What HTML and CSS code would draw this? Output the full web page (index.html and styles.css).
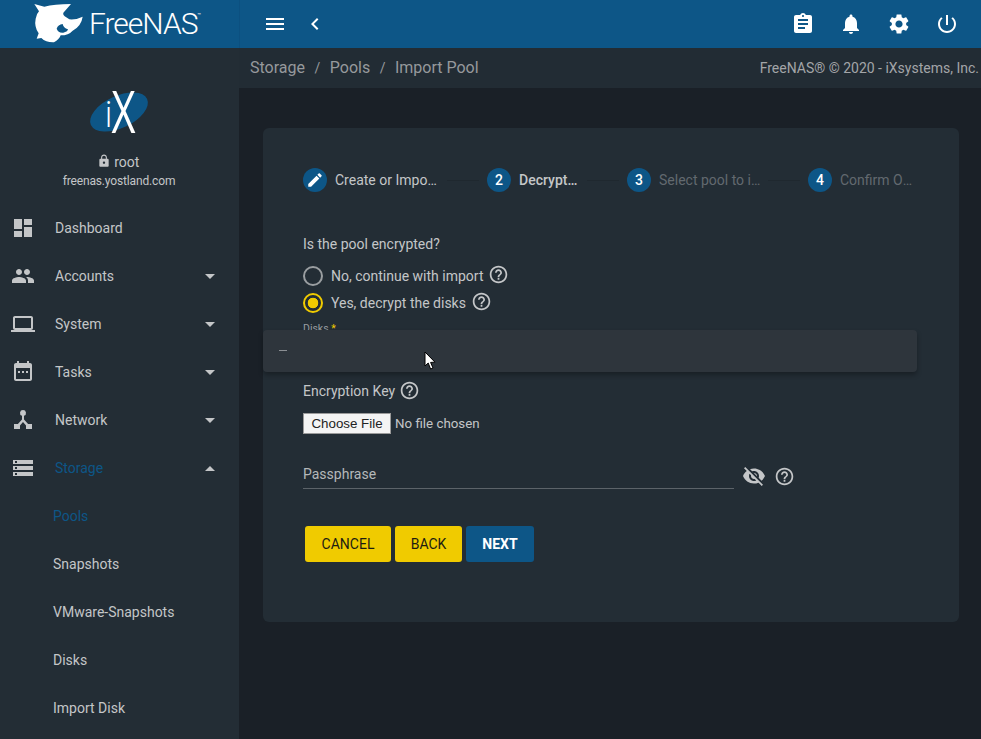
FILE: index.html
```html
<!DOCTYPE html>
<html lang="en">
<head>
    <meta charset="UTF-8">
    <title>FreeNAS - Import Pool</title>
    <link rel="stylesheet" href="styles.css">
</head>
<body>
    <svg class="icon-defs" width="0" height="0">
        <symbol id="i-menu" viewBox="0 0 24 24"><path d="M3 18h18v-2H3v2zm0-5h18v-2H3v2zm0-7v2h18V6H3z"/></symbol>
        <symbol id="i-back" viewBox="0 0 24 24"><path d="M15.41 7.41L14 6l-6 6 6 6 1.41-1.41L10.83 12z"/></symbol>
        <symbol id="i-clipboard" viewBox="0 0 24 24"><path d="M19 3h-4.18C14.4 1.84 13.3 1 12 1c-1.3 0-2.4.84-2.82 2H5c-1.1 0-2 .9-2 2v14c0 1.1.9 2 2 2h14c1.1 0 2-.9 2-2V5c0-1.1-.9-2-2-2zm-7 0c.55 0 1 .45 1 1s-.45 1-1 1-1-.45-1-1 .45-1 1-1zm2 14H7v-2h7v2zm3-4H7v-2h10v2zm0-4H7V7h10v2z"/></symbol>
        <symbol id="i-bell" viewBox="0 0 24 24"><path d="M12 22c1.1 0 2-.9 2-2h-4c0 1.1.89 2 2 2zm6-6v-5c0-3.07-1.64-5.64-4.5-6.32V4c0-.83-.67-1.5-1.5-1.5s-1.5.67-1.5 1.5v.68C7.63 5.36 6 7.92 6 11v5l-2 2v1h16v-1l-2-2z"/></symbol>
        <symbol id="i-gear" viewBox="0 0 24 24"><path d="M19.14 12.94c.04-.3.06-.61.06-.94 0-.32-.02-.64-.07-.94l2.03-1.58c.18-.14.23-.41.12-.61l-1.92-3.32c-.12-.22-.37-.29-.59-.22l-2.39.96c-.5-.38-1.03-.7-1.62-.94l-.36-2.54c-.04-.24-.24-.41-.48-.41h-3.84c-.24 0-.43.17-.47.41l-.36 2.54c-.59.24-1.13.57-1.62.94l-2.39-.96c-.22-.08-.47 0-.59.22L2.74 8.87c-.12.21-.08.47.12.61l2.03 1.58c-.05.3-.09.63-.09.94s.02.64.07.94l-2.03 1.58c-.18.14-.23.41-.12.61l1.92 3.32c.12.22.37.29.59.22l2.39-.96c.5.38 1.03.7 1.62.94l.36 2.54c.05.24.24.41.48.41h3.84c.24 0 .44-.17.47-.41l.36-2.54c.59-.24 1.13-.56 1.62-.94l2.39.96c.22.08.47 0 .59-.22l1.92-3.32c.12-.22.07-.47-.12-.61l-2.01-1.58zM12 15.6c-1.98 0-3.6-1.62-3.6-3.6s1.62-3.6 3.6-3.6 3.6 1.62 3.6 3.6-1.62 3.6-3.6 3.6z"/></symbol>
        <symbol id="i-power" viewBox="0 0 24 24"><path d="M13 3h-2v10h2V3zm4.83 2.17l-1.42 1.42C17.99 7.86 19 9.81 19 12c0 3.87-3.13 7-7 7s-7-3.13-7-7c0-2.19 1.01-4.14 2.58-5.42L6.17 5.17C4.23 6.82 3 9.26 3 12c0 4.97 4.03 9 9 9s9-4.03 9-9c0-2.74-1.23-5.18-3.17-6.83z"/></symbol>
        <symbol id="i-lock" viewBox="0 0 24 24"><path d="M18 8h-1V6c0-2.76-2.24-5-5-5S7 3.24 7 6v2H6c-1.1 0-2 .9-2 2v10c0 1.1.9 2 2 2h12c1.1 0 2-.9 2-2V10c0-1.1-.9-2-2-2zm-6 9c-1.1 0-2-.9-2-2s.9-2 2-2 2 .9 2 2-.9 2-2 2zm3.1-9H8.9V6c0-1.71 1.39-3.1 3.1-3.1 1.71 0 3.1 1.39 3.1 3.1v2z"/></symbol>
        <symbol id="i-dashboard" viewBox="0 0 24 24"><path d="M3 13h8V3H3v10zm0 8h8v-6H3v6zm10 0h8V11h-8v10zm0-18v6h8V3h-8z"/></symbol>
        <symbol id="i-group" viewBox="0 0 24 24"><path d="M16 11c1.66 0 2.99-1.34 2.99-3S17.66 5 16 5c-1.66 0-3 1.34-3 3s1.34 3 3 3zm-8 0c1.66 0 2.99-1.34 2.99-3S9.66 5 8 5C6.34 5 5 6.34 5 8s1.34 3 3 3zm0 2c-2.33 0-7 1.17-7 3.5V19h14v-2.5c0-2.33-4.67-3.5-7-3.5zm8 0c-.29 0-.62.02-.97.05 1.16.84 1.97 1.97 1.97 3.45V19h6v-2.5c0-2.33-4.67-3.5-7-3.5z"/></symbol>
        <symbol id="i-laptop" viewBox="0 0 24 24"><path d="M20 18c1.1 0 1.99-.9 1.99-2L22 6c0-1.1-.9-2-2-2H4c-1.1 0-2 .9-2 2v10c0 1.1.9 2 2 2H0v2h24v-2h-4zM4 6h16v10H4V6z"/></symbol>
        <symbol id="i-calendar" viewBox="0 0 24 24"><path d="M19 3h-1V1h-2v2H8V1H6v2H5c-1.1 0-2 .9-2 2v14c0 1.1.9 2 2 2h14c1.1 0 2-.9 2-2V5c0-1.1-.9-2-2-2zm0 16H5V8h14v11zM7 11h2v2H7zm4 0h2v2h-2zm4 0h2v2h-2z"/></symbol>
        <symbol id="i-network" viewBox="0 0 24 24"><path d="M12 2a3 3 0 0 0-1 5.83V11.4L6.9 16H3v5h6v-3.6l3-3.4 3 3.4V21h6v-5h-3.9L13 11.4V7.83A3 3 0 0 0 12 2z"/></symbol>
        <symbol id="i-storage" viewBox="0 0 24 24"><path d="M2 20h20v-4H2v4zm2-3h2v2H4v-2zM2 4v4h20V4H2zm4 3H4V5h2v2zm-4 7h20v-4H2v4zm2-3h2v2H4v-2z"/></symbol>
        <symbol id="i-edit" viewBox="0 0 24 24"><path d="M3 17.25V21h3.75L17.81 9.94l-3.75-3.75L3 17.25zM20.71 7.04c.39-.39.39-1.02 0-1.41l-2.34-2.34c-.39-.39-1.02-.39-1.41 0l-1.83 1.83 3.75 3.75 1.83-1.83z"/></symbol>
        <symbol id="i-help" viewBox="0 0 24 24"><path d="M11 18h2v-2h-2v2zm1-16C6.48 2 2 6.48 2 12s4.48 10 10 10 10-4.48 10-10S17.52 2 12 2zm0 18c-4.41 0-8-3.59-8-8s3.59-8 8-8 8 3.59 8 8-3.59 8-8 8zm0-14c-2.21 0-4 1.79-4 4h2c0-1.1.9-2 2-2s2 .9 2 2c0 2-3 1.75-3 5h2c0-2.25 3-2.5 3-5 0-2.21-1.79-4-4-4z"/></symbol>
        <symbol id="i-eye-off" viewBox="0 0 24 24"><path d="M12 7c2.76 0 5 2.24 5 5 0 .65-.13 1.26-.36 1.83l2.92 2.92c1.51-1.26 2.7-2.89 3.43-4.75-1.73-4.39-6-7.5-11-7.5-1.4 0-2.74.25-3.98.7l2.16 2.16C10.74 7.13 11.35 7 12 7zM2 4.27l2.28 2.28.46.46C3.08 8.3 1.78 10.02 1 12c1.73 4.39 6 7.5 11 7.5 1.55 0 3.03-.3 4.38-.84l.42.42L19.73 22 21 20.73 3.27 3 2 4.27zM7.53 9.8l1.55 1.55c-.05.21-.08.43-.08.65 0 1.66 1.34 3 3 3 .22 0 .44-.03.65-.08l1.55 1.55c-.67.33-1.41.53-2.2.53-2.76 0-5-2.24-5-5 0-.79.2-1.53.53-2.2zm4.31-.78l3.15 3.15.02-.16c0-1.66-1.34-3-3-3l-.17.01z"/></symbol>
    </svg>

    <header class="top-bar">
        <div class="brand">
            <svg class="shark" viewBox="0 0 180 144">
                <path fill-rule="evenodd" d="M25 12 L55 20 Q85 13 135 12 L116 34 Q107 42 116 49 L130 58 Q150 60 170 50 Q166 78 140 92 Q128 106 104 106 Q100 118 84 127 Q60 128 46 114 L32 116 L38 100 Q24 80 29 56 Q31 42 39 34 Z M92 86 Q97 100 112 98 Q124 96 126 88 Q112 84 110 72 Q96 74 92 86 Z"/>
            </svg>
            <span class="brand-name">FreeNAS</span><span class="brand-tm">&trade;</span>
        </div>
        <div class="top-left">
            <svg class="top-icon"><use href="#i-menu"/></svg>
            <svg class="top-icon"><use href="#i-back"/></svg>
        </div>
        <div class="top-right">
            <svg class="top-icon"><use href="#i-clipboard"/></svg>
            <svg class="top-icon"><use href="#i-bell"/></svg>
            <svg class="top-icon"><use href="#i-gear"/></svg>
            <svg class="top-icon"><use href="#i-power"/></svg>
        </div>
    </header>

    <div class="layout">
        <aside class="sidebar">
            <div class="user-box">
                <svg class="ix-logo" viewBox="0 0 56 42">
                    <ellipse cx="28" cy="21" rx="31" ry="16" transform="rotate(-25 28 21)"/>
                    <text x="13.5" y="36" class="ix-i">i</text>
                    <text x="20.5" y="41.5" class="ix-x" textLength="24" lengthAdjust="spacingAndGlyphs">X</text>
                </svg>
                <div class="user-name"><svg class="lock-icon"><use href="#i-lock"/></svg> root</div>
                <div class="host-name">freenas.yostland.com</div>
            </div>
            <nav class="nav">
                <a class="nav-item"><svg class="nav-icon"><use href="#i-dashboard"/></svg>Dashboard</a>
                <a class="nav-item"><svg class="nav-icon"><use href="#i-group"/></svg>Accounts<span class="caret"></span></a>
                <a class="nav-item"><svg class="nav-icon"><use href="#i-laptop"/></svg>System<span class="caret"></span></a>
                <a class="nav-item"><svg class="nav-icon"><use href="#i-calendar"/></svg>Tasks<span class="caret"></span></a>
                <a class="nav-item"><svg class="nav-icon"><use href="#i-network"/></svg>Network<span class="caret"></span></a>
                <a class="nav-item open"><svg class="nav-icon"><use href="#i-storage"/></svg>Storage<span class="caret up"></span></a>
                <a class="sub-item open">Pools</a>
                <a class="sub-item">Snapshots</a>
                <a class="sub-item">VMware-Snapshots</a>
                <a class="sub-item">Disks</a>
                <a class="sub-item">Import Disk</a>
            </nav>
        </aside>

        <main class="content">
            <div class="crumb-bar">
                <div class="crumbs">
                    <span>Storage</span><span class="sep">/</span><span>Pools</span><span class="sep">/</span><span>Import Pool</span>
                </div>
                <div class="copyright">FreeNAS&reg; &copy; 2020 - iXsystems, Inc.</div>
            </div>

            <section class="card">
                <div class="stepper">
                    <div class="step-num"><svg class="edit-icon"><use href="#i-edit"/></svg></div>
                    <div class="step-label w1">Create or Import pool</div>
                    <div class="step-line"></div>
                    <div class="step-num">2</div>
                    <div class="step-label w2 active">Decrypt pool</div>
                    <div class="step-line"></div>
                    <div class="step-num">3</div>
                    <div class="step-label w3 muted">Select pool to import</div>
                    <div class="step-line"></div>
                    <div class="step-num">4</div>
                    <div class="step-label w4 muted">Confirm Options</div>
                </div>

                <div class="question">Is the pool encrypted?</div>
                <div class="radio-row">
                    <span class="radio"></span>No, continue with import
                    <svg class="help-icon"><use href="#i-help"/></svg>
                </div>
                <div class="radio-row">
                    <span class="radio checked"></span>Yes, decrypt the disks
                    <svg class="help-icon"><use href="#i-help"/></svg>
                </div>
                <div class="disks-label">Disks <span class="req">*</span></div>

                <div class="key-label">Encryption Key <svg class="help-icon"><use href="#i-help"/></svg></div>
                <div class="file-row"><input type="file" class="file-input"></div>

                <div class="pass-row">
                    <div class="pass-field">Passphrase</div>
                    <svg class="eye-icon"><use href="#i-eye-off"/></svg>
                    <svg class="help-icon"><use href="#i-help"/></svg>
                </div>

                <div class="actions">
                    <button class="btn yellow btn-cancel">CANCEL</button>
                    <button class="btn yellow btn-back">BACK</button>
                    <button class="btn blue btn-next">NEXT</button>
                </div>
            </section>
        </main>
    </div>

    <!-- open select panel and mouse pointer sit over the form -->
    <div class="select-panel"><span class="select-dash"></span></div>
    <svg class="cursor" viewBox="0 0 12 20">
        <path d="M1 1 L1 15 L4.2 12 L6.6 18 L9 17 L6.6 11.4 L11 11.2 Z" fill="#fff" stroke="#000" stroke-width="1"/>
    </svg>
</body>
</html>
```

FILE: styles.css
```css
* {
    box-sizing: border-box;
}
html, body {
    height: 100%;
}
body {
    margin: 0;
    position: relative;
    overflow: hidden;
    display: flex;
    flex-direction: column;
    font-family: Roboto, "Liberation Sans", sans-serif;
    font-size: 14px;
    color: #c4c6c8;
    background-color: #1a2027;
}
.icon-defs {
    position: absolute;
}

/* top bar */
.top-bar {
    height: 48px;
    flex: none;
    display: flex;
    align-items: center;
    background-color: #0d5687;
    color: white;
}
.brand {
    width: 240px;
    height: 48px;
    flex: none;
    display: flex;
    align-items: flex-start;
    padding-left: 26px;
    border-right: 1px solid #0c5080;
}
.shark {
    width: 60px;
    height: 48px;
    fill: white;
    flex: none;
}
.brand-name {
    font-family: Roboto, sans-serif;
    font-weight: 300;
    font-size: 30px;
    letter-spacing: -1px;
    line-height: 48px;
    margin-left: 3px;
}
.brand-tm {
    font-size: 6px;
    line-height: 8px;
    margin-top: 11px;
}
.top-left {
    display: flex;
    gap: 16px;
    margin-left: 23px;
}
.top-right {
    display: flex;
    gap: 24px;
    margin-left: auto;
    margin-right: 22px;
}
.top-icon {
    width: 24px;
    height: 24px;
    fill: white;
}

/* sidebar */
.layout {
    flex: 1;
    display: flex;
    min-height: 0;
}
.sidebar {
    width: 239px;
    flex: none;
    background-color: #232d35;
}
.user-box {
    height: 156px;
    padding-top: 42px;
    padding-right: 1px;
    text-align: center;
}
.ix-logo {
    display: block;
    width: 56px;
    height: 42px;
    margin: 1px auto 0;
    overflow: visible;
    fill: #0d5687;
}
.ix-i {
    font-family: "Open Sans", sans-serif;
    font-weight: 300;
    font-size: 36px;
    fill: white;
}
.ix-x {
    font-family: "Open Sans", sans-serif;
    font-weight: 400;
    font-size: 58px;
    fill: white;
}
.user-name {
    margin-top: 20px;
    padding-right: 2px;
    line-height: 18px;
}
.lock-icon {
    width: 14px;
    height: 14px;
    fill: #c4c6c8;
    vertical-align: -1px;
}
.host-name {
    margin-top: 1px;
    font-size: 12px;
    letter-spacing: -0.15px;
    line-height: 18px;
}
.nav-item, .sub-item {
    display: flex;
    align-items: center;
    height: 48px;
}
.nav-item {
    padding-left: 11px;
    padding-right: 24px;
}
.sub-item {
    padding-left: 53px;
}
.open {
    color: #0d5687;
}
.nav-icon {
    width: 24px;
    height: 24px;
    margin-right: 20px;
    fill: #c4c6c8;
}
.caret {
    margin-left: auto;
    width: 0;
    height: 0;
    border-left: 5px solid transparent;
    border-right: 5px solid transparent;
    border-top: 5px solid #c4c6c8;
}
.caret.up {
    border-top: none;
    border-bottom: 5px solid #c4c6c8;
}

/* page */
.content {
    flex: 1;
    min-width: 0;
}
.crumb-bar {
    height: 40px;
    display: flex;
    align-items: center;
    justify-content: space-between;
    padding: 0 2px 0 11px;
    background-color: #222c34;
}
.crumbs {
    font-size: 16px;
    color: #96999c;
    margin-bottom: 1px;
}
.sep {
    margin: 0 9.5px;
    font-size: 14px;
}
.copyright {
    color: #a3a5a8;
    margin-bottom: 1px;
}
.card {
    width: 696px;
    height: 494px;
    margin: 40px 0 0 24px;
    padding: 40px 40px 0;
    border-radius: 6px;
    background-color: #232d35;
}

/* stepper */
.stepper {
    display: flex;
    align-items: center;
    height: 24px;
}
.step-num {
    width: 24px;
    height: 24px;
    flex: none;
    display: flex;
    align-items: center;
    justify-content: center;
    margin-right: 8px;
    border-radius: 50%;
    background-color: #0d5687;
    color: white;
    font-weight: 500;
    font-size: 14px;
}
.edit-icon {
    width: 18px;
    height: 18px;
    fill: white;
}
.step-label {
    flex: none;
    overflow: hidden;
    white-space: nowrap;
    text-overflow: ellipsis;
}
.step-label.w1 { width: 103px; }
.step-label.w2 { width: 59px; }
.step-label.w3 { width: 103px; }
.step-label.w4 { width: 73px; }
.step-label.active {
    font-weight: 500;
}
.step-label.muted {
    color: #62696f;
}
.step-line {
    width: 32px;
    height: 1px;
    flex: none;
    margin: 0 8px 0 9px;
    background-color: #1f282f;
}
.w3 + .step-line {
    margin-left: 6px;
}

/* form */
.question {
    margin-top: 42px;
    line-height: 20px;
}
.radio-row {
    display: flex;
    align-items: center;
    height: 27px;
}
.question + .radio-row {
    margin-top: 8px;
}
.radio {
    width: 20px;
    height: 20px;
    margin-right: 8px;
    border: 2px solid #9a9ea1;
    border-radius: 50%;
}
.radio.checked {
    border-color: #f0cb00;
    background: radial-gradient(circle, #f0cb00 0, #f0cb00 5px, transparent 5.6px);
}
.help-icon {
    width: 21px;
    height: 21px;
    margin-left: 5px;
    margin-top: -2px;
    fill: #c4c6c8;
    flex: none;
}
.disks-label {
    margin-top: 6px;
    font-size: 10.5px;
    line-height: 14px;
    color: #9a9ea1;
}
.req {
    color: #f0cb00;
}
.key-label {
    display: flex;
    align-items: center;
    margin-top: 45px;
    height: 20px;
}
.key-label .help-icon {
    margin-left: 4px;
}
.file-row {
    margin-top: 12px;
    height: 21px;
}
.file-input {
    color: #c4c6c8;
    font-family: Roboto, sans-serif;
    font-size: 13.33px;
    height: 21px;
}
.file-input::file-selector-button {
    width: 88px;
    height: 21px;
    margin-right: 4px;
    padding: 0;
    border: 1px solid #9a9a9a;
    border-radius: 0;
    background-color: #f4f4f4;
    color: #222;
    font-family: "Liberation Sans", sans-serif;
}
.pass-row {
    display: flex;
    align-items: center;
    margin-top: 20px;
    height: 36px;
}
.pass-field {
    width: 431px;
    height: 36px;
    padding-top: 13px;
    border-bottom: 1px solid #5c6369;
    color: #b5b8ba;
    line-height: 16px;
    margin-top: -2px;
}
.eye-icon {
    width: 24px;
    height: 24px;
    margin-left: 8px;
    margin-top: 8px;
    fill: #c4c6c8;
}
.pass-row .help-icon {
    margin-left: 8px;
    margin-top: 8px;
}
.actions {
    display: flex;
    margin-top: 36px;
    padding-left: 2px;
    gap: 4px;
}
.btn {
    height: 36px;
    padding: 0;
    border: none;
    border-radius: 3px;
    font-family: Roboto, sans-serif;
    font-size: 14px;
}
.btn-cancel { width: 86px; }
.btn-back { width: 67px; }
.btn-next { width: 68px; }
.btn.yellow {
    background-color: #f0cb00;
    color: #1d1d12;
}
.btn.blue {
    background-color: #0d5687;
    color: white;
    font-weight: 700;
}

/* overlays */
.select-panel {
    position: absolute;
    left: 263px;
    top: 330px;
    width: 654px;
    height: 42px;
    padding: 20px 16px 0;
    border-radius: 4px;
    background-color: #2e353c;
    box-shadow: 0 3px 5px rgba(0, 0, 0, 0.3);
}
.select-dash {
    display: block;
    width: 8px;
    height: 1px;
    background-color: #8b8f93;
}
.cursor {
    position: absolute;
    left: 424px;
    top: 351px;
    width: 12px;
    height: 20px;
}
```
